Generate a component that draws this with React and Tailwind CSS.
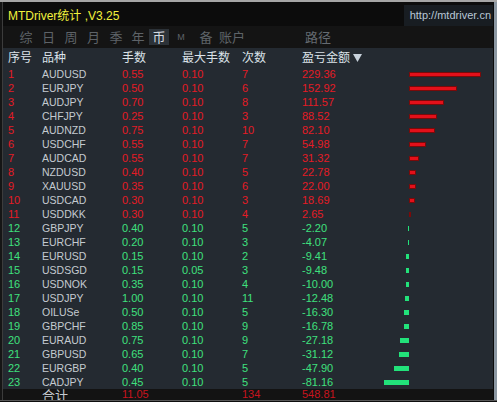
import React from 'react';

const rows = [
    [1, 'AUDUSD', '0.55', '0.10', '7', '229.36'],
    [2, 'EURJPY', '0.50', '0.10', '6', '152.92'],
    [3, 'AUDJPY', '0.70', '0.10', '8', '111.57'],
    [4, 'CHFJPY', '0.25', '0.10', '3', '88.52'],
    [5, 'AUDNZD', '0.75', '0.10', '10', '82.10'],
    [6, 'USDCHF', '0.55', '0.10', '7', '54.98'],
    [7, 'AUDCAD', '0.55', '0.10', '7', '31.32'],
    [8, 'NZDUSD', '0.40', '0.10', '5', '22.78'],
    [9, 'XAUUSD', '0.35', '0.10', '6', '22.00'],
    [10, 'USDCAD', '0.30', '0.10', '3', '18.69'],
    [11, 'USDDKK', '0.30', '0.10', '4', '2.65'],
    [12, 'GBPJPY', '0.40', '0.10', '5', '-2.20'],
    [13, 'EURCHF', '0.20', '0.10', '3', '-4.07'],
    [14, 'EURUSD', '0.15', '0.10', '2', '-9.41'],
    [15, 'USDSGD', '0.15', '0.05', '3', '-9.48'],
    [16, 'USDNOK', '0.35', '0.10', '4', '-10.00'],
    [17, 'USDJPY', '1.00', '0.10', '11', '-12.48'],
    [18, 'OILUSe', '0.50', '0.10', '5', '-16.30'],
    [19, 'GBPCHF', '0.85', '0.10', '9', '-16.78'],
    [20, 'EURAUD', '0.75', '0.10', '9', '-27.18'],
    [21, 'GBPUSD', '0.65', '0.10', '7', '-31.12'],
    [22, 'EURGBP', '0.40', '0.10', '5', '-47.90'],
    [23, 'CADJPY', '0.45', '0.10', '5', '-81.16'],
];

const tabs = [
    ['综', 'w-[22px]'],
    ['日', 'w-[23px]'],
    ['周', 'w-[22px]'],
    ['月', 'w-[23px]'],
    ['季', 'w-[22px]'],
    ['年', 'w-[22px]'],
    ['币', 'w-[20px]'],
    ['M', 'w-[24px]'],
    ['备', 'w-[26px]'],
    ['账户', 'w-[26px]'],
];

const cjk = { fontFamily: '"Liberation Sans", "Noto Sans CJK SC", sans-serif' };

function Bar({ value }) {
    const v = parseFloat(value);
    const w = Math.max(1, Math.round(Math.abs(v) * 0.314));
    return (
        <div className="flex items-center h-full">
            <div className="w-[39px] flex justify-end">
                {v < 0 && <div className="h-[5px] bg-[#22e27a]" style={{ width: w }}></div>}
            </div>
            <div className="flex-1 flex">
                {v >= 0 && <div className="h-[5px] bg-[#e4101a] border border-[#7a0a0a]" style={{ width: w }}></div>}
            </div>
        </div>
    );
}

export default function App() {
    return (
        <div className="w-[497px] h-[402px] bg-[#0b0b0b] flex flex-col overflow-hidden text-[11px] leading-none" style={cjk}>
            <div className="h-[2px] bg-[#a6a6a6]"></div>
            <div className="flex-1 flex min-h-0">
                {/* left chart edge */}
                <div className="w-[3px] bg-[#151515] border-r border-[#3c3c3c]"></div>

                <div className="flex-1 flex flex-col min-w-0 bg-[#242a31]">
                    {/* title */}
                    <div className="h-[24px] flex items-center bg-[#0c0c0c] pt-[3px]">
                        <span className="pl-[5px] text-[12px] text-[#f2f23c]">MTDriver统计 ,V3.25</span>
                        <span className="ml-auto h-full flex items-center pr-[2px] pl-[6px] bg-[#181d22] text-[11px] text-[#b9c8d6]">http://mtdriver.cn</span>
                    </div>

                    {/* tabs */}
                    <div className="h-[22px] flex items-center bg-[#141414] pl-[12px] text-[13px] text-[#5e6368]">
                        {tabs.map(([t, w]) => (
                            <span
                                key={t}
                                className={`${w} h-[16px] flex items-center justify-center ${t === '币' ? 'bg-[#2c3238] text-[#d4dae0]' : ''} ${t === 'M' ? 'text-[9px]' : ''}`}
                            >
                                {t}
                            </span>
                        ))}
                        <span className="ml-[60px] text-[#656b71] text-[13px]">路径</span>
                    </div>

                    {/* header */}
                    <div className="h-[19px] flex items-center text-[12px] text-[#dbe2e8] pl-[5px]">
                        <span className="w-[34px]">序号</span>
                        <span className="w-[80px]">品种</span>
                        <span className="w-[60px]">手数</span>
                        <span className="w-[60px]">最大手数</span>
                        <span className="w-[60px]">次数</span>
                        <span className="flex items-center gap-[3px]">
                            盈亏金额
                            <svg width="9" height="8" viewBox="0 0 9 8"><path d="M0 0 L9 0 L4.5 8 Z" fill="#c8d2dc" /></svg>
                        </span>
                    </div>

                    {/* rows */}
                    <div className="flex flex-col">
                        {rows.map(([i, sym, lots, max, cnt, pl]) => {
                            const neg = pl.startsWith('-');
                            const c = neg ? 'text-[#3fe07e]' : 'text-[#e51b25]';
                            return (
                                <div key={i} className="h-[14px] flex items-center pl-[5px]">
                                    <span className={`w-[34px] ${c}`}>{i}</span>
                                    <span className="w-[80px] text-[10.5px] text-[#c4cad0]">{sym}</span>
                                    <span className={`w-[60px] ${c}`}>{lots}</span>
                                    <span className={`w-[60px] ${c}`}>{max}</span>
                                    <span className={`w-[60px] ${c}`}>{cnt}</span>
                                    <span className={`w-[68px] ${c}`}>{pl}</span>
                                    <div className="flex-1 h-full"><Bar value={pl} /></div>
                                </div>
                            );
                        })}
                    </div>

                    {/* total */}
                    <div className="flex-1 flex items-start pl-[5px] bg-[#131313] text-[#c8141e] overflow-hidden">
                        <span className="w-[34px]"></span>
                        <span className="w-[80px] text-[13px] text-[#c4cad0]">合计</span>
                        <span className="w-[60px]">11.05</span>
                        <span className="w-[60px]"></span>
                        <span className="w-[60px]">134</span>
                        <span>548.81</span>
                    </div>
                </div>

                {/* right edge */}
                <div className="w-[1px] bg-[#0b0b0b]"></div>
                <div className="w-[3px] bg-[#8c98a3]"></div>
            </div>
            <div className="h-[2px] bg-[#0e0e0e] border-t border-[#585858]"></div>
        </div>
    );
}
